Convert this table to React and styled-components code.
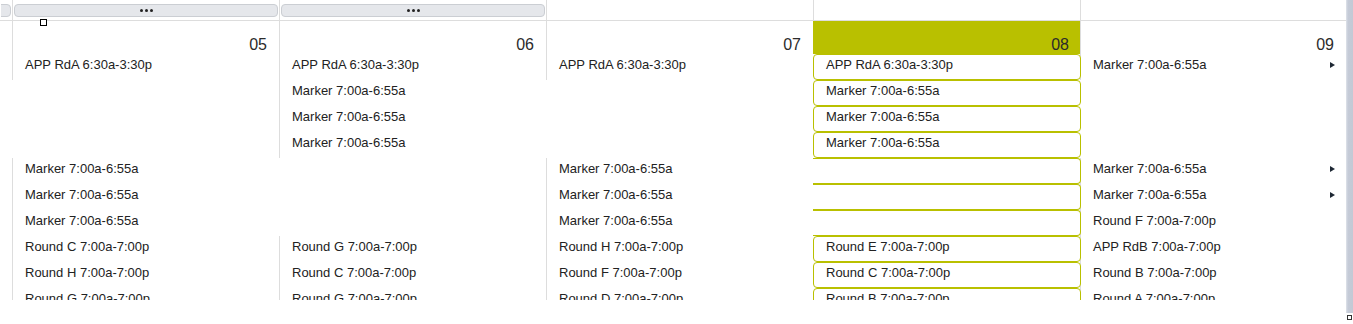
import React from 'react';
import styled, { createGlobalStyle } from 'styled-components';

const GlobalStyle = createGlobalStyle`
  html, body {
    margin: 0;
    padding: 0;
    background: #fff;
  }
  body {
    font-family: 'Liberation Sans', Arial, sans-serif;
  }
`;

const LINE = '#dddddd';
const TODAY = '#b9c000';

const Page = styled.div`
  display: flex;
  width: 1353px;
  height: 324px;
  overflow: hidden;
  background: #fff;
`;

const Board = styled.div`
  position: relative;
  flex: 1;
  display: flex;
  flex-direction: column;
`;

const Grid = styled.div`
  display: grid;
  grid-template-columns: 12px repeat(4, 267px) 1fr;
`;

const TopRow = styled(Grid)`
  height: 21px;
  border-bottom: 1px solid ${LINE};
  box-sizing: border-box;
`;

const TopCell = styled.div`
  border-left: 1px solid ${(p) => (p.$edge ? 'transparent' : LINE)};
  box-sizing: border-box;
  padding: 4px 1px 0;
  overflow: hidden;
`;

const MoreButton = styled.div`
  display: flex;
  align-items: center;
  justify-content: center;
  gap: 2px;
  height: 13px;
  box-sizing: border-box;
  margin-left: ${(p) => (p.$cut ? '-60px' : '0')};
  background: #e5e7eb;
  border: 1px solid #cbced3;
  border-radius: 4px;
`;

const Dot = styled.span`
  width: 3px;
  height: 3px;
  border-radius: 50%;
  background: #222;
`;

const Days = styled(Grid)`
  height: 279px;
  overflow: hidden;
  align-items: start;
`;

const DayColumn = styled.div`
  display: flex;
  flex-direction: column;
`;

const DateHeader = styled.div`
  position: relative;
  z-index: 1;
  height: 33px;
  box-sizing: border-box;
  display: flex;
  align-items: flex-end;
  justify-content: flex-end;
  padding: 0 12px 0 0;
  margin-right: ${(p) => (p.$today ? '-1px' : '0')};
  border-left: 1px solid ${(p) => (p.$edge ? 'transparent' : p.$today ? TODAY : LINE)};
  background: ${(p) => (p.$today ? TODAY : 'transparent')};
  color: #2b2b2b;
  font-size: 16px;
  line-height: 18px;
`;

const EventCell = styled.div`
  height: 26px;
  box-sizing: border-box;
  display: flex;
  align-items: flex-start;
  padding: 3px 0 0 12px;
  border-left: 1px solid ${(p) => (p.$filled && !p.$edge ? LINE : 'transparent')};
  color: #222;
  font-size: 13px;
  line-height: 15px;
  white-space: nowrap;
`;

const EventBox = styled.div`
  position: relative;
  z-index: 1;
  height: 26px;
  box-sizing: border-box;
  display: flex;
  align-items: flex-start;
  margin-right: -1px;
  padding: 2px 0 0 12px;
  background: #fff;
  border: 1px solid ${TODAY};
  border-left: ${(p) => (p.$cont ? 'none' : `1px solid ${TODAY}`)};
  border-radius: ${(p) => (p.$cont ? '0 4px 4px 0' : '4px')};
  color: #222;
  font-size: 13px;
  line-height: 15px;
  white-space: nowrap;
`;

const MoreArrow = styled.span`
  margin: 5px 11px 0 auto;
  width: 0;
  height: 0;
  border-top: 3px solid transparent;
  border-bottom: 3px solid transparent;
  border-left: 5px solid #1d2733;
`;

const Handle = styled.div`
  position: absolute;
  left: 40px;
  top: 19px;
  width: 7px;
  height: 7px;
  box-sizing: border-box;
  border: 1px solid #000;
  background: #fff;
  z-index: 2;
`;

const ScrollTrack = styled.div`
  width: 7px;
  display: flex;
  flex-direction: column;
  align-items: center;
`;

const Thumb = styled.div`
  width: 7px;
  height: 313px;
  background: linear-gradient(to right, #dfe3ea 0, #c5cbd7 2px, #c3c9d5 100%);
`;

const Corner = styled.div`
  width: 5px;
  height: 5px;
  margin-top: 2px;
  box-sizing: border-box;
  border: 1px solid #333;
  background: #fff;
`;

const M = 'Marker 7:00a-6:55a';
const A = 'APP RdA 6:30a-3:30p';
const r = (l) => `Round ${l} 7:00a-7:00p`;

const days = [
  { date: '', edge: true, menu: true, cut: true, events: [] },
  { date: '05', menu: true, events: [A, null, null, null, M, M, M, r('C'), r('H'), r('G')] },
  { date: '06', menu: true, events: [A, M, M, M, null, null, null, r('G'), r('C'), r('G')] },
  { date: '07', events: [A, null, null, null, M, M, M, r('H'), r('F'), r('D')] },
  {
    date: '08',
    today: true,
    events: [A, M, M, M, { cont: true }, { cont: true }, { cont: true }, r('E'), r('C'), r('B')],
  },
  {
    date: '09',
    events: [
      { t: M, arrow: true },
      null,
      null,
      null,
      { t: M, arrow: true },
      { t: M, arrow: true },
      r('F'),
      'APP RdB 7:00a-7:00p',
      r('B'),
      r('A'),
    ],
  },
];

function renderEvent(day, ev, i) {
  if (day.today) {
    if (ev && ev.cont) return <EventBox key={i} $cont />;
    return <EventBox key={i}>{ev}</EventBox>;
  }
  if (!ev) return <EventCell key={i} $edge={day.edge} />;
  if (typeof ev === 'string') {
    return (
      <EventCell key={i} $filled $edge={day.edge}>
        {ev}
      </EventCell>
    );
  }
  return (
    <EventCell key={i} $filled $edge={day.edge}>
      {ev.t}
      {ev.arrow && <MoreArrow />}
    </EventCell>
  );
}

export default function App() {
  return (
    <>
      <GlobalStyle />
      <Page>
        <Board>
          <TopRow>
            {days.map((d, i) => (
              <TopCell key={i} $edge={d.edge}>
                {d.menu && (
                  <MoreButton $cut={d.cut}>
                    <Dot />
                    <Dot />
                    <Dot />
                  </MoreButton>
                )}
              </TopCell>
            ))}
          </TopRow>
          <Days>
            {days.map((d, i) => (
              <DayColumn key={i}>
                <DateHeader $edge={d.edge} $today={d.today}>
                  {d.date}
                </DateHeader>
                {d.events.map((ev, j) => renderEvent(d, ev, j))}
              </DayColumn>
            ))}
          </Days>
          <Handle />
        </Board>
        <ScrollTrack>
          <Thumb />
          <Corner />
        </ScrollTrack>
      </Page>
    </>
  );
}
